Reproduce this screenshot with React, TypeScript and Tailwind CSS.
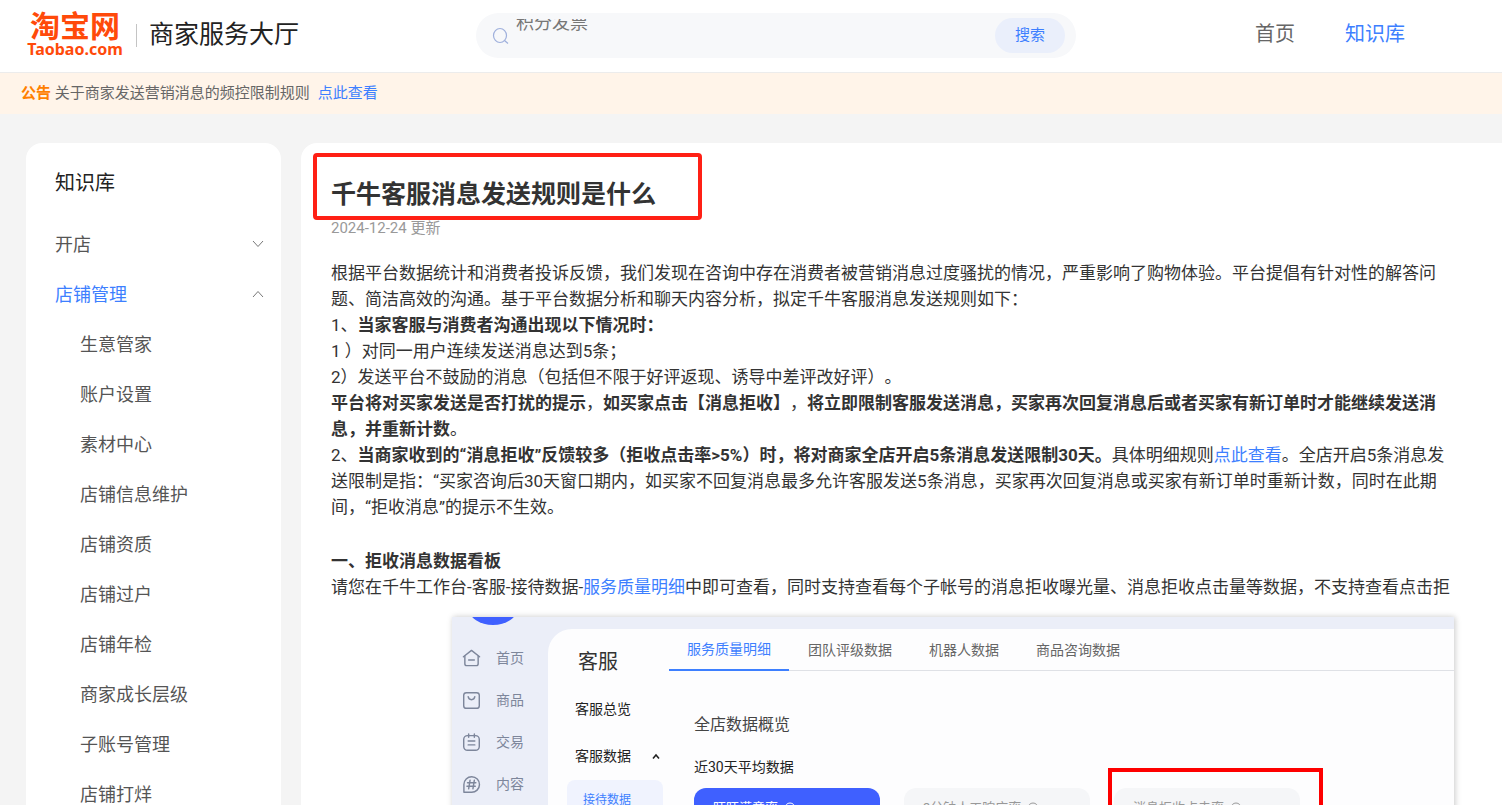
import React, { useState } from 'react';

const NAV_ITEMS = ['生意管家', '账户设置', '素材中心', '店铺信息维护', '店铺资质', '店铺过户', '店铺年检', '商家成长层级', '子账号管理', '店铺打烊'];

const TABS = ['服务质量明细', '团队评级数据', '机器人数据', '商品咨询数据'];

const METRICS = [
  { label: '旺旺满意率', active: true },
  { label: '3分钟人工响应率', active: false },
  { label: '消息拒收点击率', active: false },
];

const WORKBENCH_MENU = [
  {
    label: '首页',
    icon: (
      <>
        <path d="M1.5 8.2 L10 1.5 L18.5 8.2" />
        <path d="M3 7.5 V15.5 a2 2 0 0 0 2 2 H15 a2 2 0 0 0 2-2 V7.5" />
        <path d="M7 11.5 H13" />
      </>
    ),
  },
  {
    label: '商品',
    icon: (
      <>
        <rect x="1.8" y="1.8" width="16.4" height="16.4" rx="2.8" />
        <path d="M6.5 6 C7.2 10.2 12.8 10.2 13.5 6" />
      </>
    ),
  },
  {
    label: '交易',
    icon: (
      <>
        <rect x="1.8" y="2.8" width="16.4" height="15.4" rx="4" />
        <path d="M7 1 V4.5 M13 1 V4.5 M6.5 8.5 H13.5 M6.5 12.5 H13.5" />
      </>
    ),
  },
  {
    label: '内容',
    icon: (
      <>
        <path d="M2 18.2 V10 A8.2 8.2 0 1 1 10 18.2 Z" />
        <path d="M8.5 5.5 L7 14.5 M13 5.5 L11.5 14.5 M5.8 8.2 H14.6 M5.2 11.8 H14" />
      </>
    ),
  },
];

const Chevron: React.FC<{ open?: boolean }> = ({ open }) => (
  <svg viewBox="0 0 12 12" className="h-3 w-3" fill="none" stroke="#777" strokeWidth="1">
    <path d={open ? 'M1 9 L6 3.5 L11 9' : 'M1 3 L6 8.5 L11 3'} />
  </svg>
);

const Header: React.FC = () => {
  const [query, setQuery] = useState('');

  return (
    <header className="flex h-[73px] shrink-0 items-start border-b border-[#ececec] bg-white pl-[26px]">
      <div className="flex w-[450px] items-center pt-3">
        <a href="#" className="flex w-[98px] flex-col items-center font-bold text-[#ff4a0a]">
          <span className="text-[30px] leading-7">淘宝网</span>
          <span className="font-['Noto_Sans'] text-base leading-4">Taobao.com</span>
        </a>
        <span className="ml-3 h-[23px] w-px bg-[#c4c4c4]" />
        <span className="ml-3 text-[25px] leading-[46px] text-[#222]">商家服务大厅</span>
      </div>

      <form className="relative mt-[13px] flex h-[45px] w-[600px] items-center rounded-full bg-[#f7f8fa] pr-[11px] pl-4" onSubmit={(e) => e.preventDefault()}>
        <svg viewBox="0 0 18 18" className="h-[18px] w-[18px] shrink-0" fill="none" stroke="#9fb0dc" strokeWidth="1.2">
          <ellipse cx="8" cy="8.5" rx="6.5" ry="7" />
          <path d="M12.5 13.5 L16 16.5" />
        </svg>
        <input
          aria-label="搜索"
          value={query}
          onChange={(e) => setQuery(e.target.value)}
          className="ml-2 h-8 min-w-0 flex-1 bg-transparent text-lg text-[#333] outline-none"
        />
        {!query && (
          <div className="pointer-events-none absolute top-1.5 left-10 h-8 overflow-hidden">
            <div className="-mt-2 text-lg leading-6 text-[#777]">积分发票</div>
          </div>
        )}
        <button type="submit" className="h-[35px] w-[70px] rounded-full bg-[#eaeffb] text-[15px] text-[#3d7fff]">
          搜索
        </button>
      </form>

      <nav className="ml-auto flex gap-[50px] pr-[97px] text-xl leading-[68px]">
        <a href="#" className="text-[#666]">首页</a>
        <a href="#" className="text-[#3d7fff]">知识库</a>
      </nav>
    </header>
  );
};

const Sidebar: React.FC = () => (
  <aside className="w-[255px] shrink-0 rounded-2xl bg-white pt-4 text-[#555]">
    <h2 className="pl-[29px] text-xl leading-[48px] text-[#222]">知识库</h2>
    <div className="mt-3 text-[18px]">
      <button className="flex h-[50px] w-full items-center justify-between pr-[17px] pl-[29px]">
        开店
        <Chevron />
      </button>
      <button className="flex h-[50px] w-full items-center justify-between pr-[17px] pl-[29px] text-[#3d7fff]">
        店铺管理
        <Chevron open />
      </button>
      <ul>
        {NAV_ITEMS.map((item) => (
          <li key={item}>
            <a href="#" className="flex h-[50px] items-center pl-[54px]">{item}</a>
          </li>
        ))}
      </ul>
    </div>
  </aside>
);

const Workbench: React.FC = () => (
  <figure className="mt-[17px] mr-12 ml-[121px] flex h-[480px] overflow-hidden bg-[#ebeef8] text-sm shadow-[1px_0_6px_rgba(0,0,0,0.22)]">
    <div className="w-24 shrink-0">
      <svg viewBox="0 0 96 9" className="h-[9px] w-24">
        <ellipse cx="41" cy="-8" rx="24" ry="16" fill="#3f60ff" />
      </svg>
      <ul className="mt-[11px] text-[#7d869b]">
        {WORKBENCH_MENU.map((item) => (
          <li key={item.label} className="flex h-[42px] items-center gap-[15px] pl-2.5">
            <svg viewBox="0 0 20 20" className="h-[19px] w-[19px]" fill="none" stroke="currentColor" strokeWidth="1.5" strokeLinecap="round" strokeLinejoin="round">
              {item.icon}
            </svg>
            {item.label}
          </li>
        ))}
      </ul>
    </div>

    <div className="mt-3 flex min-w-0 flex-1 rounded-tl-3xl bg-[#fdfdfe]">
      <div className="w-[121px] shrink-0 pt-3.5 text-[#222]">
        <div className="pl-[30px] text-xl leading-[38px] text-[#333]">客服</div>
        <div className="mt-[5px] pl-[27px] leading-[47px]">客服总览</div>
        <div className="flex items-center gap-5 pl-[27px] leading-[47px]">
          客服数据
          <svg viewBox="0 0 10 10" className="h-2.5 w-2.5" fill="none" stroke="#222" strokeWidth="1.6">
            <path d="M2 6.5 L5 3 L8 6.5" />
          </svg>
        </div>
        <div className="ml-[19px] w-24 rounded-lg bg-[#f0f3fe] pl-4 text-xs leading-10 text-[#3d7fff]">接待数据</div>
      </div>

      <div className="min-w-0 flex-1">
        <div className="flex h-[42px] gap-px border-b border-[#dfe1e6] text-[#666]">
          {TABS.map((tab, i) => (
            <button
              key={tab}
              className={i === 0 ? 'h-[42px] border-b-2 border-[#3d7fff] px-[18px] text-[#3d7fff]' : 'h-[42px] px-[18px]'}
            >
              {tab}
            </button>
          ))}
        </div>
        <div className="pt-8 pl-[25px]">
          <div className="text-base leading-[44px] text-[#444]">全店数据概览</div>
          <div className="leading-10 text-[#222]">近30天平均数据</div>
          <div className="relative mt-px flex gap-6">
            {METRICS.map((metric) => (
              <div
                key={metric.label}
                className={
                  metric.active
                    ? 'flex h-24 w-[186px] items-start gap-1.5 rounded-xl bg-[#3f60ff] px-[19px] pt-2.5 text-[13px] leading-5 text-white'
                    : 'flex h-24 w-[186px] items-start gap-1.5 rounded-xl bg-[#f5f6f8] px-[19px] pt-2.5 text-[13px] leading-5 text-[#999]'
                }
              >
                {metric.label}
                <svg viewBox="0 0 12 12" className="mt-1 h-3 w-3" fill="none" stroke="currentColor">
                  <circle cx="6" cy="6" r="5" />
                  <path d="M4.5 5 a1.5 1.5 0 1 1 1.5 1.5 V7.5" />
                </svg>
              </div>
            ))}
            <div className="absolute -top-5 left-[414px] h-36 w-[215px] border-4 border-[#fe0000]" />
          </div>
        </div>
      </div>
    </div>
  </figure>
);

const Article: React.FC = () => (
  <main className="min-w-0 flex-1 rounded-tl-2xl bg-white pt-2.5 pl-[30px] text-[#333]">
    <h1 className="-ml-[18px] h-[67px] w-[389px] rounded-sm border-4 border-[#ff2015] pt-[17px] pl-3.5 text-[25px] leading-[42px] font-bold">
      千牛客服消息发送规则是什么
    </h1>
    <p className="text-[15px] leading-4 text-[#999]">2024-12-24 更新</p>

    <div className="mt-6 text-[17px] leading-[26px] whitespace-nowrap">
      <p>
        根据平台数据统计和消费者投诉反馈，我们发现在咨询中存在消费者被营销消息过度骚扰的情况，严重影响了购物体验。平台提倡有针对性的解答问
        <br />
        题、简洁高效的沟通。基于平台数据分析和聊天内容分析，拟定千牛客服消息发送规则如下：
      </p>
      <p>1、<strong>当家客服与消费者沟通出现以下情况时：</strong></p>
      <p>1 ）对同一用户连续发送消息达到5条；</p>
      <p>2）发送平台不鼓励的消息（包括但不限于好评返现、诱导中差评改好评）。</p>
      <p>
        <strong>平台将对买家发送是否打扰的提示</strong>，<strong>如买家点击【消息拒收】</strong>，<strong>将立即限制客服发送消息，买家再次回复消息后或者买家有新订单时才能继续发送消</strong>
        <br />
        <strong>息，并重新计数</strong>。
      </p>
      <p>
        2、<strong>当商家收到的“消息拒收”反馈较多（拒收点击率&gt;5%）时，将对商家全店开启5条消息发送限制30天。</strong>具体明细规则<a href="#" className="text-[#3d7fff]">点此查看</a>。全店开启5条消息发
        <br />
        送限制是指：“买家咨询后30天窗口期内，如买家不回复消息最多允许客服发送5条消息，买家再次回复消息或买家有新订单时重新计数，同时在此期
        <br />
        间，“拒收消息”的提示不生效。
      </p>
      <h2 className="mt-7 font-bold">一、拒收消息数据看板</h2>
      <p>
        请您在千牛工作台-客服-接待数据-<a href="#" className="text-[#3d7fff]">服务质量明细</a>中即可查看，同时支持查看每个子帐号的消息拒收曝光量、消息拒收点击量等数据，不支持查看点击拒
      </p>
    </div>

    <Workbench />
  </main>
);

const App: React.FC = () => (
  <div
    lang="zh-CN"
    className="flex h-screen flex-col overflow-hidden bg-[#f4f4f4] font-[Roboto,'Noto_Sans_CJK_SC',sans-serif] [text-spacing-trim:space-all]"
  >
    <Header />
    <div className="h-[41px] shrink-0 bg-[#fff4e9] pl-[21px] text-[15px] leading-[40px] text-[#666]">
      <strong className="text-[#ff8000]">公告</strong> 关于商家发送营销消息的频控限制规则
      <a href="#" className="ml-2 text-[#3d7fff]">点此查看</a>
    </div>
    <div className="mt-[29px] flex gap-5 pl-[26px]">
      <Sidebar />
      <Article />
    </div>
  </div>
);

export default App;
